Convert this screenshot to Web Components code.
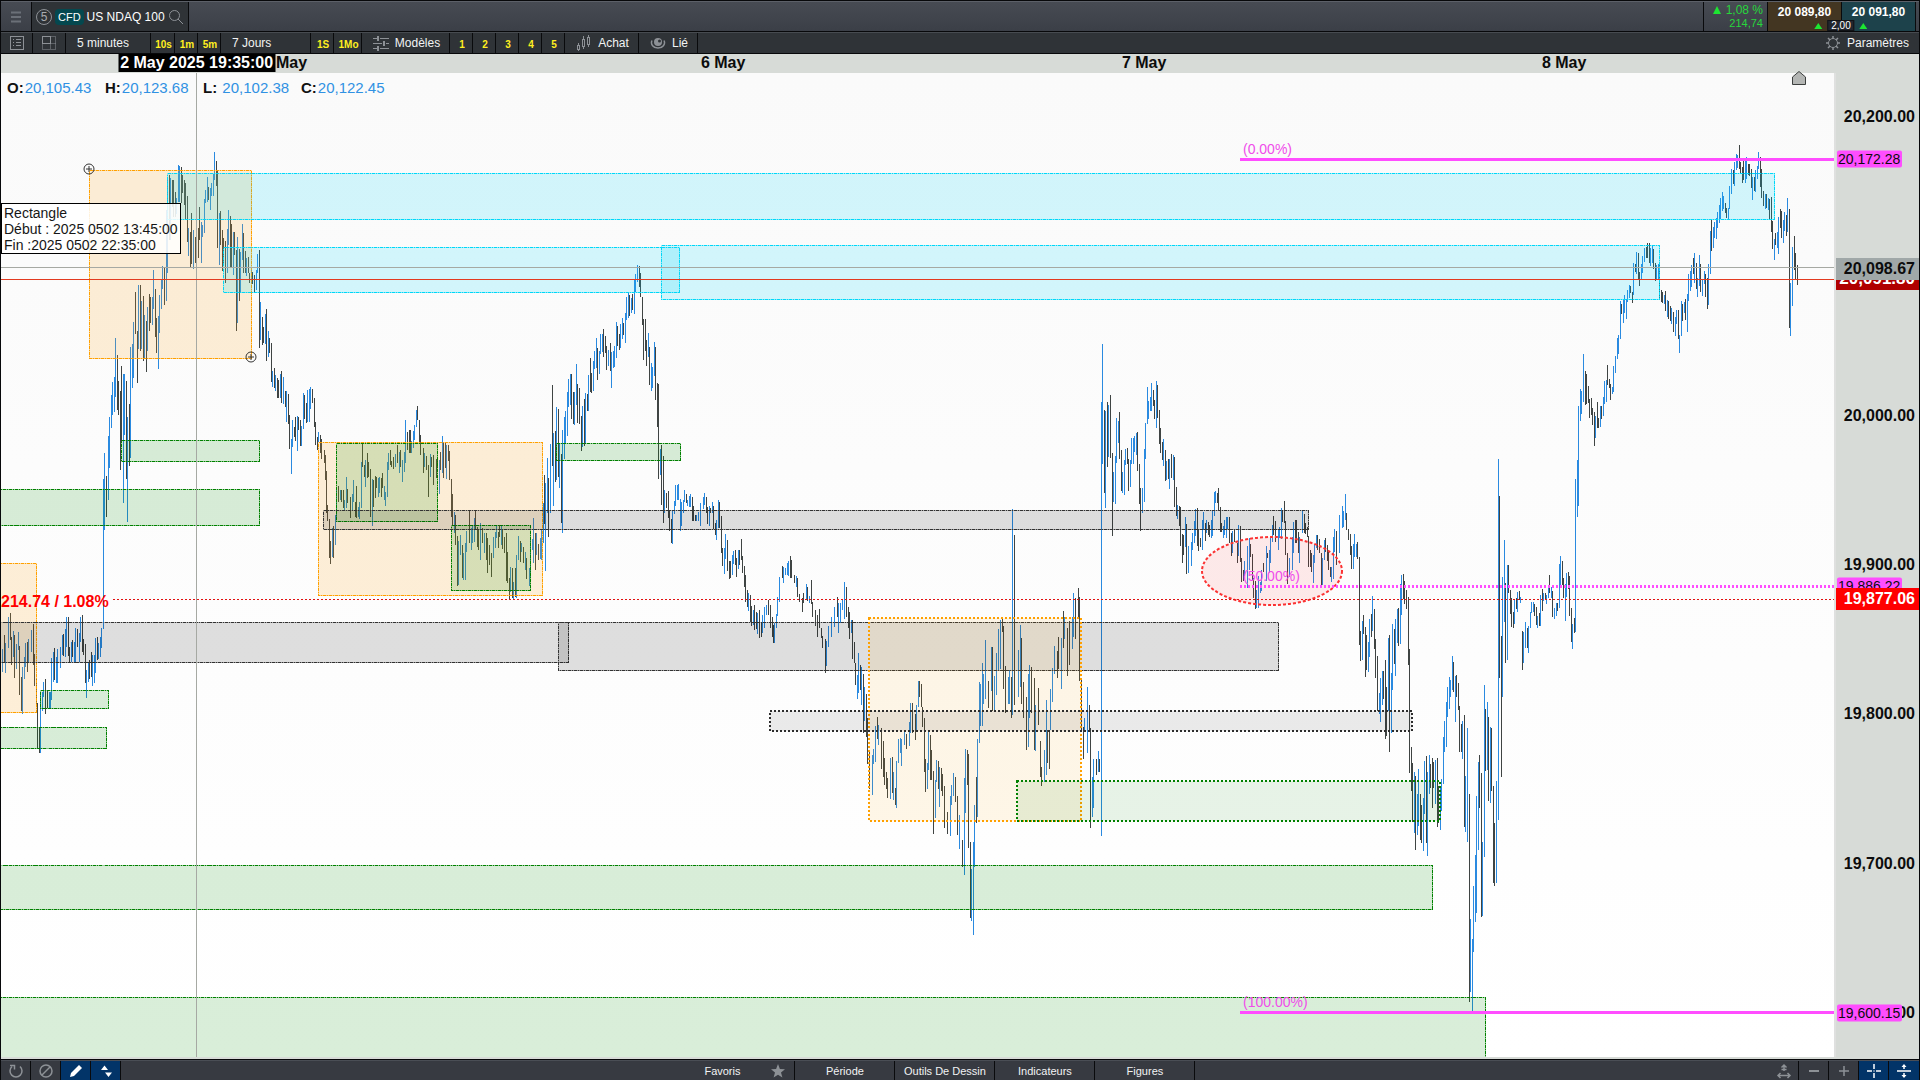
<!DOCTYPE html>
<html lang="fr">
<head>
<meta charset="utf-8">
<title>US NDAQ 100</title>
<style>
  html,body{ margin:0; height:100%; background:#0a0b0d; }
  body{ font-family:"Liberation Sans",Arial,sans-serif; }
</style>
</head>
<body>
<trading-app></trading-app>

<script>
/* 16x16 line icons, stroke = currentColor */
const ICONS={
  menu:'<path d="M3 3.500h10M3 8h10M3 12.500h10" stroke-width="2"/>',
  search:'<circle cx="6.500" cy="6.500" r="5"/><path d="M10 10l5 5"/>',
  list:'<rect x="1.500" y="1.500" width="13" height="13"/><path d="M4 4.500h1M4 7.500h1M4 10.500h1M7 4.500h5M7 7.500h5M7 10.500h5"/>',
  grid:'<rect x="1.500" y="1.500" width="8" height="7"/><path d="M9.500 1.500h5v13h-13v-6M9.500 8.500v6M9.500 8.500h5" stroke-dasharray="1 1"/>',
  sliders:'<path d="M0 3.500h4M7 3.500h9M0 8.500h9M13 8.500h3M0 13.500h4M7 13.500h9" /><path d="M5 1v5M11 6v5M5 11v5" stroke-width="2"/>',
  candles:'<path d="M2.500 8v2M2.500 14v2M7.500 1v3M7.500 11v3M12.500 0v2M12.500 9v3"/><rect x="1.500" y="10.500" width="2" height="4"/><rect x="6.500" y="4.500" width="2" height="7"/><rect x="11.500" y="2.500" width="2" height="7"/>',
  eye:'<path d="M2 5.500a6.500 5.500 0 1 0 12 0" stroke-width="1.500"/><circle cx="8" cy="7" r="4" fill="currentColor" stroke="none"/><circle cx="9.500" cy="6" r="1.500" fill="#2f3337" stroke="none"/>',
  gear:'<circle cx="8" cy="8" r="4.500"/><path d="M8 1v2.500M8 12.500v2.500M1 8h2.500M12.500 8h2.500M3 3l2 2M11 11l2 2M3 13l2-2M11 5l2-2" stroke-width="1.500"/>',
  undo:'<path d="M4 3.500a6 6 0 1 0 8 0" stroke-width="1.500"/><path d="M2 2.500h4.500v4" stroke-width="1.500"/>',
  forbid:'<circle cx="8" cy="8" r="6" stroke-width="1.500"/><path d="M4 12l8-8" stroke-width="1.500"/>',
  pencil:'<path d="M2 14l1-4 8-8 3 3-8 8z" fill="currentColor" stroke="none"/>',
  updown:'<path d="M3 7l3.500-4.500L10 7zM7 9.500h7L10.500 14z" fill="currentColor" stroke="none"/>',
  star:'<path d="M8 1l1.900 4.900 5.100.3-4 3.300 1.400 5L8 11.700l-4.400 2.800 1.400-5-4-3.300 5.100-.3z" fill="currentColor" stroke="none"/>',
  fit:'<path d="M8 2v6M5.500 4.500L8 2l2.500 2.500M5.500 6.500h5M2 12.500h12M4.500 10L2 12.500 4.500 15M11.500 10l2.500 2.500-2.500 2.500" stroke-width="1.500"/>',
  minus:'<path d="M3 8h10" stroke-width="2"/>',
  plus:'<path d="M3 8h10M8 3v10" stroke-width="1.500"/>',
  cross:'<path d="M8 1v5M8 10v5M1 8h5M10 8h5M7.500 8h1" stroke-width="1.500"/>',
  split:'<path d="M1 8h14M8 6V2M8 10v4" stroke-width="1.500"/><path d="M5.500 4L8 1l2.500 3zM5.500 12L8 15l2.500-3z" fill="currentColor" stroke="none"/>'
};

function define(name,html,setup){
  customElements.define(name,class extends HTMLElement{
    constructor(){
      super();
      const tpl=document.createElement('template');
      tpl.innerHTML=html;
      this.attachShadow({mode:'open'}).appendChild(tpl.content.cloneNode(true));
    }
    connectedCallback(){ if(setup) setup(this,this.shadowRoot); }
  });
}

define('ui-icon',`
  <style>
    :host{ display:block; width:16px; height:16px; flex:none; color:#8d9196; }
    svg{ display:block; width:100%; height:100%; fill:none; stroke:currentColor; stroke-width:1; }
  </style>
  <svg viewBox="0 0 16 16" aria-hidden="true"></svg>
`,(el,root)=>{ root.querySelector('svg').innerHTML=ICONS[el.getAttribute('name')]||''; });

/* one cell of a bar: optional icon + slotted text */
define('bar-button',`
  <style>
    :host{ display:block; flex:none; box-sizing:border-box; border-right:1px solid #090a0c; }
    button{ all:unset; box-sizing:border-box; width:100%; height:100%; display:flex; align-items:center; justify-content:center; gap:6px; padding-left:2px; white-space:nowrap; color:#f2f3f4; font-size:12px; cursor:pointer; }
    button.bare{ gap:0; padding-left:0; }
    ui-icon[hidden]{ display:none; }
    :host([left]) button{ justify-content:flex-start; padding-left:11px; }
    :host([fav]) button{ color:#ffef1f; font-size:10px; font-weight:bold; padding-top:3px; }
    :host([small]) button{ font-size:11px; padding-left:0; }
    :host([on]){ background:#023468; }
    :host([on]) ui-icon{ color:#fff; }
    :host([last]){ border-right:0; }
  </style>
  <button type="button"><ui-icon hidden></ui-icon><slot></slot></button>
`,(el,root)=>{
  const icon=el.getAttribute('icon'), button=root.querySelector('button');
  if(icon){
    const node=document.createElement('ui-icon');
    node.setAttribute('name',icon);
    root.querySelector('ui-icon').replaceWith(node);
  }
  if(el.hasAttribute('label')){
    button.setAttribute('aria-label',el.getAttribute('label'));
    button.className='bare';
  }
  if(el.hasAttribute('w')) el.style.width=el.getAttribute('w')+'px';
});

define('instrument-bar',`
  <style>
    :host{ display:flex; height:29px; border-top:1px solid #5c6068; background:linear-gradient(#474b53,#3b3f47); color:#fff; font-size:12px; }
    .name{ display:flex; align-items:center; gap:3px; padding:0 4px 0 4px; background:#2f3337; border-right:1px solid #090a0c; }
    .num{ width:14px; height:14px; border:1px solid #8d9196; border-radius:50%; display:grid; place-items:center; font-size:12px; color:#a8abaf; }
    .cfd{ background:#04484f; border-radius:4px; padding:0 3px; line-height:16px; font-size:11px; }
    .search{ all:unset; display:block; cursor:pointer; }
    .fill{ flex:1; }
    .change{ box-sizing:border-box; width:64px; padding:2px 4px 0 0; border-left:1px solid #090a0c; text-align:right; line-height:13px; color:#27d63c; }
    .change small{ display:block; font-size:11px; }
    .quotes{ position:relative; display:flex; }
    .side{ all:unset; box-sizing:border-box; width:74px; padding-bottom:9px; text-align:center; font-weight:bold; line-height:20px; border-left:1px solid #090a0c; cursor:pointer; }
    .bid{ background:#433622; }
    .ask{ background:#1d424b; }
    .spread{ position:absolute; left:50%; bottom:0; transform:translateX(-50%); display:flex; align-items:center; gap:5px; font-size:10px; color:#27e63c; }
    .spread b{ font-weight:normal; color:#fff; background:#22262e; border:1px solid #111317; padding:0 3px; line-height:9px; }
    .up{ width:0; height:0; border:4px solid transparent; border-top:0; border-bottom:6px solid #1de532; }
    .change .up{ display:inline-block; border-bottom-width:8px; margin-right:1px; }
    .end{ width:3px; border-left:1px solid #090a0c; }
  </style>
  <bar-button icon="menu" label="Menu" w="31"></bar-button>
  <div class="name">
    <span class="num">5</span><span class="cfd">CFD</span><span>US NDAQ 100</span>
    <button class="search" aria-label="Rechercher"><ui-icon name="search"></ui-icon></button>
  </div>
  <div class="fill"></div>
  <div class="change"><i class="up"></i> 1,08 %<small>214,74</small></div>
  <div class="quotes">
    <button class="side bid">20 089,80</button><button class="side ask">20 091,80</button>
    <div class="spread"><i class="up"></i><b>2,00</b><i class="up"></i></div>
  </div>
  <div class="end"></div>
`,(el,root)=>{ root.querySelector('bar-button').shadowRoot.querySelector('ui-icon').style.color='#6b7078'; });

define('chart-toolbar',`
  <style>
    :host{ display:flex; height:20px; border-top:1px solid #474b50; background:#2f3337; }
    .fill{ flex:1; }
  </style>
  <bar-button icon="list" label="Liste" w="32"></bar-button>
  <bar-button icon="grid" label="Grille" w="33"></bar-button>
  <bar-button left w="85">5 minutes</bar-button>
  <bar-button fav w="24">10s</bar-button>
  <bar-button fav w="23">1m</bar-button>
  <bar-button fav w="23">5m</bar-button>
  <bar-button left w="90">7 Jours</bar-button>
  <bar-button fav w="23">1S</bar-button>
  <bar-button fav w="28">1Mo</bar-button>
  <bar-button icon="sliders" w="88">Modèles</bar-button>
  <bar-button fav w="23">1</bar-button>
  <bar-button fav w="23">2</bar-button>
  <bar-button fav w="23">3</bar-button>
  <bar-button fav w="23">4</bar-button>
  <bar-button fav w="23">5</bar-button>
  <bar-button icon="candles" w="74">Achat</bar-button>
  <bar-button icon="eye" w="59">Lié</bar-button>
  <div class="fill"></div>
  <bar-button icon="gear" last w="106">Paramètres</bar-button>
`);

define('time-axis',`
  <style>
    :host{ display:block; position:relative; height:19px; overflow:hidden; background:#d7dbd7; font-size:16px; font-weight:bold; line-height:18px; color:#0c0c0c; }
    span{ position:absolute; top:0; transform:translateX(-50%); white-space:nowrap; }
    .cursor{ background:#000; color:#fff; padding:0 2px; }
  </style>
`,(el,root)=>{
  /* the cursor label hides the day number of the first mark */
  const days=[['May',15.15],['6 May',37.65],['7 May',59.6],['8 May',81.5]];
  for(const [text,left] of days) root.innerHTML+=`<span style="left:${left}%">${text}</span>`;
  root.innerHTML+='<span class="cursor" style="left:10.2%">2 May 2025 19:35:00</span>';
});

define('price-axis',`
  <style>
    :host{ display:block; position:relative; box-sizing:border-box; width:85px; border-left:2px solid #dfe0df; background:#d7dbd7; font-size:16px; font-weight:bold; color:#0c0c0c; overflow:hidden; }
    span{ position:absolute; right:0; box-sizing:border-box; padding-right:4px; line-height:22px; transform:translateY(-50%); text-align:right; }
    .fib{ left:1px; right:17px; padding:0 0 0 1px; background:#ff4dff; border-radius:2px; font-size:14px; font-weight:normal; line-height:17px; text-align:left; }
    .last{ left:-1px; background:#b00000; color:#fff; font-size:17px; border-radius:2px 0 0 2px; }
    .cursor{ left:-1px; background:#a0a8a8; }
    .close{ left:-1px; background:#f00; color:#fff; }
  </style>
`,(el,root)=>{
  const top=20229.8, range=659.3;
  const marks=[
    [20200,''],[20000,''],[19900,''],[19800,''],[19700,''],[19600,''],
    [20172.28,'fib'],[19886.22,'fib'],[19600.15,'fib'],
    [20091.80,'last'],[20098.67,'cursor'],[19877.06,'close']
  ];
  for(const [price,kind] of marks){
    const text=price.toLocaleString('en-US',{minimumFractionDigits:2});
    root.innerHTML+=`<span class="${kind}" style="top:${(top-price)/range*100}%">${text}</span>`;
  }
});

/* bars: colour (b up / k down) x high low, in plot units */
const BARS=`
b2 649 672,k4 635 663,b5 643 673,b8 617 648,k10 613 640,k11 637 665,b13 631 657,k14 635 678,b16 644 669,b18 632 650,k19 646 695,k21 677 711,b22 667 714,b24 657 679,b25 643 667,k27 642 672,b28 639 662,b31 630 652,k33 624 665,k34 654 686,k36 679 705,k37 703 748,k39 727 753,b40 693 753,b42 692 711,b43 682 697,k45 679 714,k47 690 708,b49 692 708,b50 692 708,b51 658 700,b53 652 682,k54 648 680,b56 657 683,b57 649 683,b60 647 668,b62 635 655,k63 634 656,b65 629 657,b66 617 647,k68 617 656,k69 647 662,b71 642 662,k72 640 657,b74 642 662,b75 628 662,k77 629 647,b79 633 662,b80 617 642,k82 615 652,k83 639 655,k85 644 683,b86 670 698,b88 662 682,k89 660 679,k91 652 677,b92 655 686,b94 655 683,b95 638 673,k97 637 660,b98 643 659,b100 637 657,b101 628 648,b103 479 629,b104 453 530,k106 476 517,b108 436 500,b109 417 468,b111 395 428,b112 382 415,b114 377 412,b115 338 397,k117 355 410,k118 381 415,k120 391 470,k121 366 442,b123 374 503,b124 374 435,k126 381 479,b127 417 522,k129 404 466,b130 347 458,b132 344 388,b133 322 378,k135 292 334,k137 331 383,b138 285 349,k140 285 351,b141 301 349,k143 296 361,b144 315 358,k146 321 372,b147 307 351,k149 294 331,k150 297 323,b152 297 325,b153 270 309,k155 289 337,k156 318 353,b158 316 369,b159 295 333,b161 280 309,b162 266 289,k164 268 305,b166 210 301,b167 180 273,k169 175 240,b170 178 240,k172 180 207,k173 180 217,k175 192 217,b176 198 214,b178 165 202,b179 166 202,k181 167 203,k182 175 193,k184 180 205,k185 183 220,k187 196 242,b188 228 256,k190 232 267,k191 213 264,b193 230 269,k195 237 263,b196 242 261,k198 228 258,k199 207 240,b201 222 263,b202 225 237,b204 199 233,b205 190 203,b207 177 202,k208 187 200,b210 188 210,b211 183 196,b213 174 196,b214 152 180,k216 161 186,k217 170 248,b219 213 265,k220 211 245,k222 230 271,k223 238 266,k225 241 283,b227 229 273,b228 210 245,k230 216 267,k231 224 267,b233 232 275,k234 232 255,k236 250 331,b237 237 323,k239 249 301,b240 252 293,b242 224 260,k243 233 273,k245 251 273,b246 258 276,k248 257 273,k249 273 283,b251 268 283,k252 272 284,k254 275 292,b256 270 290,b257 254 273,k259 250 348,b260 302 340,k262 317 345,k263 327 343,b265 314 344,k266 309 361,b268 331 357,k269 338 353,k271 343 382,b272 371 387,k274 368 388,b275 375 391,k277 378 398,k278 380 398,b280 374 398,k281 371 403,b283 377 404,k285 391 407,b286 391 422,k288 394 424,k289 415 449,b291 439 474,b292 420 447,k294 427 437,k295 417 441,b297 416 451,k298 417 430,k300 420 446,b301 426 446,b303 393 429,k304 395 419,k306 403 423,b307 390 422,b309 389 422,b310 387 409,k312 389 403,k314 398 427,k315 422 445,k317 437 450,b318 432 442,k320 435 453,k321 439 459,k324 450 463,k325 455 480,k326 471 513,k327 505 521,k329 519 558,k330 541 564,b332 528 557,k333 526 558,b335 515 545,b336 487 517,k338 486 502,b340 490 500,k341 490 502,k343 490 508,b344 500 511,b346 477 508,k347 489 503,k350 497 518,b352 494 510,b353 480 502,k355 502 517,k356 486 518,b358 507 517,b359 502 519,b361 462 508,k362 443 467,k364 465 477,b365 460 487,k367 453 478,k368 462 477,k370 469 517,b372 479 526,k373 480 507,k375 476 498,k376 477 488,b378 478 497,b379 477 493,k381 478 497,k382 473 488,b384 486 500,b385 492 506,b387 462 497,b388 453 470,k390 450 465,k391 461 467,k393 457 469,b395 454 467,k397 445 463,b399 452 473,k400 450 467,b402 460 482,b404 452 472,b405 420 463,k407 432 450,k409 430 453,k410 430 453,b411 441 453,b413 431 448,b414 425 440,b416 410 427,k417 406 420,k419 420 443,k420 435 455,k423 448 473,b424 453 467,k426 456 470,k428 465 497,b430 454 477,k431 457 467,k433 455 485,k436 459 478,k437 458 467,b439 460 494,k440 452 470,b442 436 473,k443 442 478,k445 443 468,b446 445 479,k448 445 461,k449 451 480,k451 479 517,k452 494 525,b454 512 533,k455 515 545,k457 536 586,b458 541 585,b460 535 555,k462 545 578,b463 553 580,b465 543 580,b466 531 552,k469 511 543,b471 528 550,b472 526 543,b474 518 542,k475 511 530,k477 527 547,k478 530 550,b480 523 560,k482 528 543,b484 533 553,k486 533 560,k487 538 573,k489 545 565,k491 553 577,b493 537 558,b495 532 548,b496 526 538,k498 532 548,k499 525 537,b501 526 545,k502 529 549,k504 537 553,k506 533 581,k507 552 583,k509 578 599,b510 567 592,k512 568 598,b513 582 599,k515 568 597,b516 555 598,b518 536 560,k520 541 562,b521 543 552,k523 547 563,b525 552 570,k526 558 579,b529 568 586,b530 538 577,b532 539 550,b533 518 563,k535 533 570,b536 533 555,k538 544 560,b540 538 559,b541 529 560,b543 503 543,
k544 475 524,b545 483 571,b547 458 513,k548 478 537,b550 444 513,k552 385 466,b553 433 506,k555 431 482,b556 407 480,k558 409 477,b559 444 488,k561 454 523,b562 430 533,b564 417 459,b565 411 443,b567 392 436,b568 379 407,b570 374 405,k571 374 419,k573 392 424,b574 392 425,b576 364 405,k577 384 423,k579 388 424,k581 416 451,b582 406 447,k584 399 446,b585 393 444,k587 394 411,b588 375 411,k590 358 392,k591 373 393,b593 361 391,b594 351 369,b596 338 368,k597 348 380,b599 351 374,b600 334 354,b602 334 352,k603 329 357,k605 336 353,k606 346 370,b608 350 366,k610 343 371,b611 352 388,b613 351 368,b614 346 367,b616 322 358,k617 326 346,k619 334 350,b620 324 348,b622 318 339,k623 323 335,b625 313 343,b626 297 320,b628 293 318,k629 295 316,b631 298 313,k632 294 310,b634 280 314,b635 274 292,b637 265 282,k639 266 287,k640 273 297,k642 297 325,k643 319 360,k645 319 351,k646 340 366,b648 333 357,k649 347 385,b651 363 391,b652 367 388,b654 342 376,k655 347 400,k657 383 427,k658 384 479,b660 449 475,k661 445 505,k663 456 523,b664 490 513,k666 493 508,k668 491 518,k669 510 531,k671 519 543,b672 510 544,b674 501 514,b675 485 506,b677 485 500,b678 484 500,b680 499 531,b681 502 526,b683 500 513,b684 490 502,k686 494 503,b687 500 506,b689 496 507,b690 494 507,k692 497 521,k693 506 521,k695 515 521,b696 515 521,b698 512 521,b700 503 526,b703 497 509,b704 493 505,k706 497 513,k707 507 524,b709 506 526,k710 508 513,b712 502 513,k713 506 529,k715 523 535,b716 520 540,b718 500 528,k719 502 528,k721 516 553,k722 548 566,b724 548 574,b725 534 559,k727 540 571,k729 561 579,k730 561 578,b732 555 575,b733 551 564,k735 550 565,k736 558 577,b738 550 569,k739 550 565,k741 539 560,k742 556 573,k744 566 587,k745 575 602,k747 590 607,b748 593 611,k750 595 622,k751 606 626,b753 610 625,k754 605 630,k756 612 629,b757 613 634,k759 610 638,
k761 622 637,b762 615 633,b764 607 628,b766 605 615,k768 600 615,k770 605 628,k772 617 637,k773 625 643,b774 623 643,b776 614 628,b777 597 616,b779 577 602,k782 566 578,b783 567 583,b785 568 575,b787 563 575,b788 561 576,k790 556 578,k791 560 578,k794 575 583,b796 576 587,k797 578 597,k799 594 602,k802 598 612,k803 593 603,b806 584 600,k807 587 601,b809 596 603,k811 580 604,k812 602 617,k815 610 626,k817 615 637,k819 609 628,k821 628 638,k822 636 648,k825 639 673,b826 641 666,b828 626 647,b831 617 637,b834 607 627,k837 597 617,b838 603 633,b840 603 623,b842 599 610,b844 582 619,k846 587 617,k848 607 628,k849 612 639,b851 620 633,k852 620 659,k854 642 663,k855 663 685,b857 675 699,b858 653 693,k860 665 690,b861 667 705,k863 674 733,b864 687 721,k866 694 737,k867 718 764,k869 752 789,b872 755 795,b873 749 764,b875 726 762,k877 717 739,b878 725 745,k881 728 769,k883 741 777,k884 758 785,k886 772 789,k887 778 798,b890 758 799,k892 757 793,b893 772 800,k895 788 805,b896 761 808,b898 739 763,b900 738 753,b901 739 766,b904 731 745,k906 734 749,b909 722 746,b910 703 733,k912 703 733,k915 714 740,b916 705 731,b918 681 707,k919 681 697,k921 684 707,k922 707 727,k924 718 772,k925 759 792,b927 763 789,b928 731 770,k930 735 780,k931 750 780,k933 771 834,b935 780 818,b936 760 782,k938 761 789,b939 767 807,k941 768 791,k942 774 796,k944 786 828,k947 812 834,b950 796 836,b951 785 805,b953 773 796,k955 777 802,k957 796 835,b959 815 849,k962 840 867,b964 778 875,b965 749 813,k967 750 785,k968 754 848,k970 842 918,b971 869 921,b973 842 935,b974 805 867,k976 777 823,b977 739 817,b979 682 743,b980 684 726,b982 663 726,b983 674 704,b985 640 699,k988 681 708,b991 647 691,k992 647 711,b994 676 711,b996 653 695,b998 629 670,b1000 620 669,k1002 619 632,k1003 626 689,k1005 666 713,b1008 677 704,b1009 670 704,k1011 677 718,b1012 509 715,k1014 535 705,b1018 650 697,b1020 625 687,k1021 638 704,k1023 682 718,k1026 697 750,b1028 674 747,b1029 665 718,k1031 667 713,k1034 678 750,b1035 705 751,k1038 688 725,k1040 741 777,k1041 767 786,b1044 750 782,b1046 700 775,k1047 730 763,k1049 730 769,b1050 689 730,b1052 668 702,b1054 646 674,k1057 651 678,k1058 637 669,b1061 638 689,k1063 611 648,b1064 617 639,k1067 628 676,k1069 621 665,b1072 617 649,b1073 593 637,k1075 598 639,k1078 588 618,k1079 597 681,k1081 680 730,k1083 727 759,b1084 718 732,b1087 687 753,k1089 705 732,k1090 728 828,b1092 777 817,b1093 759 808,k1096 759 775,b1098 751 772,k1099 759 772,
b1101 402 836,b1102 344 464,k1104 410 493,b1105 411 508,k1107 402 467,b1108 405 457,k1110 395 458,k1112 453 536,b1113 472 502,b1115 456 504,b1116 418 463,b1118 421 443,k1119 412 459,k1121 450 491,b1122 472 493,b1124 460 495,b1125 449 465,k1127 448 464,k1128 459 491,b1130 460 487,b1131 438 464,b1133 438 464,b1134 436 452,b1136 433 455,k1137 432 471,k1139 464 504,k1140 488 531,b1142 488 513,b1144 449 502,b1145 423 459,b1147 387 424,b1148 401 419,b1150 397 411,b1151 383 411,k1153 390 406,k1154 400 419,b1156 381 428,k1157 385 418,k1159 410 444,k1160 428 453,k1162 442 460,b1163 439 466,k1165 450 481,b1166 461 480,k1168 459 479,b1169 459 489,k1171 454 478,b1173 455 480,k1174 457 507,k1176 487 516,b1177 505 519,k1179 506 526,k1180 507 546,k1182 534 563,k1183 535 555,b1185 517 547,k1186 524 574,b1188 546 573,b1191 542 566,b1192 533 550,b1194 521 543,b1195 509 536,k1197 508 546,k1198 530 551,k1200 538 547,b1202 520 550,b1203 512 530,k1205 523 541,b1206 520 533,k1208 522 535,k1209 525 537,b1211 520 538,b1212 511 536,b1214 492 516,b1215 491 503,k1217 493 503,k1218 488 510,k1220 507 532,k1221 523 532,b1223 526 538,b1224 520 535,b1226 517 538,b1227 517 529,k1229 517 543,k1231 533 556,b1232 531 553,k1234 530 542,k1237 543 563,b1238 525 556,k1240 526 562,k1241 558 582,k1243 570 581,b1244 561 576,b1247 546 588,b1249 538 570,k1250 544 557,k1252 554 580,k1253 578 598,k1255 581 609,b1256 590 608,b1258 576 608,b1260 582 593,b1261 570 591,k1263 563 572,b1266 546 581,k1267 553 558,b1269 550 573,b1270 538 563,b1272 525 542,k1273 516 535,k1275 521 542,b1278 530 550,b1279 527 538,b1281 508 539,k1282 511 522,k1284 501 523,k1285 521 555,k1287 553 584,b1289 558 577,b1292 537 570,b1293 522 553,k1295 520 543,k1296 520 543,k1298 532 553,b1299 537 563,b1302 511 533,k1304 514 533,k1305 523 534,k1307 527 537,k1308 536 567,k1310 550 567,k1311 553 572,b1313 555 583,b1314 544 563,b1316 535 548,k1317 535 550,k1319 539 553,k1321 553 586,b1322 558 585,b1324 540 560,k1325 538 552,k1327 545 561,k1328 552 570,k1330 567 577,b1331 567 582,b1333 537 579,b1334 529 552,k1336 531 565,b1339 515 553,b1342 506 528,b1343 511 527,b1345 494 520,k1346 513 530,k1348 529 540,k1350 534 555,k1351 546 569,b1353 544 569,b1354 534 557,b1356 544 557,k1357 542 559,k1359 557 645,k1360 631 661,b1362 621 660,k1363 615 634,k1365 627 677,k1366 635 670,b1368 642 672,b1369 619 657,k1371 614 637,b1372 596 631,k1374 609 649,k1375 639 678,k1377 656 711,b1379 693 714,b1380 678 722,b1382 671 705,k1383 671 699,k1385 660 739,k1386 687 736,b1388 638 711,k1389 635 752,b1391 673 733,b1392 624 690,k1394 629 664,b1395 619 676,b1397 609 643,k1398 608 646,b1400 584 644,b1401 575 615,k1403 574 599,k1404 581 604,k1406 590 609,k1408 597 665,
k1409 649 773,k1411 747 791,k1412 763 822,b1414 772 833,k1415 776 850,b1417 794 835,b1418 769 826,k1420 794 840,k1421 805 843,b1423 798 851,b1424 761 814,k1426 756 843,b1427 772 856,b1429 755 794,k1430 764 788,k1432 758 808,k1433 762 788,b1435 760 804,k1437 758 827,k1438 786 823,b1440 787 830,b1441 779 811,b1443 737 784,b1444 721 752,b1446 702 747,b1447 687 717,b1449 677 709,b1450 680 697,b1452 656 690,k1453 662 692,b1455 676 722,k1456 675 697,k1458 683 710,k1459 706 752,k1461 724 752,b1462 721 759,k1464 715 827,b1465 776 832,b1467 728 842,k1469 794 1002,b1470 919 992,b1472 939 1011,b1473 886 952,b1475 855 922,b1476 796 913,b1478 762 850,k1479 755 808,k1481 773 917,b1482 842 916,b1484 685 857,k1485 709 771,b1487 702 770,k1488 717 801,b1490 727 803,k1491 728 791,k1493 786 883,k1494 823 886,b1496 781 883,b1498 459 820,k1499 496 678,k1501 636 777,b1502 577 697,b1504 540 622,k1505 583 663,b1507 565 660,k1508 565 593,k1510 590 614,k1511 598 627,k1513 612 628,b1514 600 624,k1516 598 609,b1517 592 612,k1519 591 600,b1520 597 603,k1522 631 670,b1523 632 663,b1525 622 648,k1527 628 648,b1528 626 653,b1530 612 628,b1531 602 613,b1533 602 612,k1534 604 616,k1536 607 625,b1537 616 628,k1539 613 626,b1540 595 626,k1542 589 611,b1543 593 601,k1545 593 600,b1546 595 604,b1548 588 598,k1549 575 593,b1551 587 598,k1552 591 617,b1554 608 619,b1556 603 616,k1557 603 611,b1559 564 608,b1560 556 585,k1562 561 585,k1563 578 598,b1565 584 621,b1566 573 597,k1568 572 589,k1569 576 616,k1571 608 642,b1572 624 649,k1574 618 633,b1575 479 632,
b1577 460 517,b1578 406 506,b1580 389 421,b1581 391 414,b1583 354 402,k1585 371 405,k1586 374 404,k1588 386 403,k1589 399 418,k1591 398 415,k1592 408 425,k1594 412 446,b1595 416 438,k1597 402 428,k1598 418 428,b1600 406 427,k1601 406 419,b1603 397 416,b1604 381 404,b1606 380 402,k1607 365 385,k1609 379 388,k1610 384 400,b1612 387 394,b1613 366 392,b1615 356 373,b1617 338 359,b1618 335 354,b1620 301 339,k1621 304 314,b1623 299 323,b1624 295 313,b1626 299 319,b1627 290 302,b1629 285 298,k1630 286 293,k1632 292 303,b1633 263 295,k1635 264 272,b1636 252 274,k1638 253 279,k1639 272 286,b1641 264 279,b1642 256 273,b1644 248 262,k1646 247 258,k1647 243 258,k1649 243 263,b1650 248 266,b1652 246 263,k1653 249 269,k1655 263 281,b1656 265 280,b1658 264 279,k1659 262 299,k1661 290 302,k1662 292 303,b1664 295 304,k1665 291 311,b1667 300 317,k1668 301 319,k1670 306 321,b1671 308 324,k1673 312 332,b1675 317 336,b1676 310 324,k1678 310 339,b1679 335 353,b1681 301 336,k1682 304 321,b1684 302 313,k1685 299 320,b1687 294 332,b1688 274 301,b1690 271 291,b1691 265 287,k1693 258 274,b1694 253 283,k1696 263 289,b1697 278 297,b1699 255 286,k1700 264 292,b1702 279 296,b1704 271 284,k1705 274 297,k1707 278 309,b1708 264 305,b1710 231 274,k1711 219 251,b1713 227 248,b1714 222 238,b1716 218 239,b1717 212 228,b1719 205 223,b1720 198 219,b1722 192 211,b1723 196 209,k1725 203 213,k1726 208 218,b1728 208 219,b1729 186 209,b1731 169 194,k1733 170 184,b1734 162 186,b1736 154 170,b1737 155 168,k1739 145 169,k1740 162 173,k1742 167 183,k1743 161 180,b1745 161 183,b1746 157 179,k1748 164 175,k1749 164 176,k1751 169 188,b1752 177 200,k1754 177 191,b1755 170 192,b1757 166 179,b1758 152 169,k1760 157 187,k1761 169 198,k1763 191 206,b1765 194 209,k1766 194 208,b1768 198 210,k1769 199 219,k1771 197 232,k1772 221 249,b1774 239 260,k1775 233 245,b1777 232 248,b1778 217 254,k1780 209 228,k1781 211 238,b1783 220 243,b1784 212 231,k1786 215 236,b1787 198 232,k1789 209 328,b1790 283 336,b1792 247 306,k1794 236 270,k1795 253 279,k1797 265 285`;

/* zones: kind, left, top, right, bottom */
const ZONES=[
  ['orange',89,170,251,358],['cyan',167,173,1774,219],['cyan',223,247,679,292],['cyan',661,245,1659,299],
  ['green',121,440,259,461],['green',-4,489,259,525],['orange',-4,563,36,712],
  ['gray',-4,622,568,662],['gray',558,622,1278,670],['green',40,690,108,708],['green',-4,727,106,748],
  ['orange',318,442,542,595],['green',336,443,437,521],['green',451,525,530,590],
  ['gray',323,510,1308,529],['green',556,443,680,460],
  ['orange dots',869,618,1081,821],['black dots',770,711,1412,731],['green dots',1017,781,1440,821],
  ['green',-4,865,1432,909],['green',-4,997,1485,1070]
];

define('price-plot',`
  <style>
    :host{ display:block; position:relative; overflow:hidden; background:linear-gradient(#fafafa,#fff); }
    svg{ position:absolute; inset:0; width:100%; height:100%; fill:none; }
    .b{ stroke:#2a8ae0; }
    .k{ stroke:#3f4443; }
    .zone{ stroke-dasharray:3 1 1 1; }
    .dots{ stroke-width:2; stroke-dasharray:2 2; }
    .orange{ stroke:#ffa000; fill:rgba(255,165,30,.17); }
    .cyan{ stroke:#00d8f8; fill:rgba(0,220,255,.16); }
    .green{ stroke:#008000; fill:rgba(0,140,0,.15); }
    .gray{ stroke:#333; fill:rgba(0,0,0,.12); }
    .black{ stroke:#2c2c2c; fill:rgba(0,0,0,.08); }
    .orange.dots{ fill:rgba(255,165,0,.09); }
    .green.dots{ fill:rgba(0,128,0,.09); }
    .under{ fill:none; stroke-dasharray:none; stroke-opacity:.4; }
    .ellipse{ stroke:#fb3232; stroke-width:2; stroke-dasharray:3 2; fill:rgba(255,0,0,.08); }
    .fib{ stroke:#ff4dff; stroke-width:3; }
    .cross{ stroke:#a6a9a3; }
    .handle{ stroke:#333; fill:none; }
    text{ font-size:14px; fill:#f04dea; }
    .pct{ font-size:16px; font-weight:bold; fill:#f00; }
    dl{ position:relative; margin:0; padding:6px 0 0 6px; display:grid; grid-template-columns:repeat(4,98px); font-size:15px; line-height:18px; }
    dl div{ display:flex; gap:1px; }
    dt{ font-weight:bold; color:#111; }
    dd{ margin:0; color:#3091e3; }
    .tip{ position:absolute; left:0; top:130px; border:1px solid #000; background:rgba(255,255,255,.86); padding:1px 2px 0; font-size:14px; line-height:16px; color:#161616; white-space:pre; }
  </style>
  <svg viewBox="1 73 1833 984" preserveAspectRatio="none">
    <g class="bars" shape-rendering="crispEdges"><path class="b"/><path class="k"/></g>
    <g class="zones" shape-rendering="crispEdges"></g>
    <ellipse class="ellipse" cx="1272" cy="571" rx="70" ry="34"/>
    <g shape-rendering="crispEdges">
      <path class="fib" d="M1240 159.500H1834M1240 1012.500H1834"/>
      <path class="fib" d="M1240 586.500H1834" stroke-dasharray="2 2"/>
      <path stroke="#e01010" d="M113 599.500H1834" stroke-dasharray="2 2"/>
      <path class="cross" d="M0 267.500H1834M196.500 73V1057"/>
      <path stroke="#e23a20" d="M0 279.500H1834"/>
    </g>
    <g class="handle"><circle cx="89" cy="169" r="5"/><path d="M86 169h6M89 166v6"/><circle cx="251" cy="357" r="5"/><path d="M248 357h6M251 354v6"/></g>
    <text x="1243" y="154">(0.00%)</text>
    <text x="1243" y="581">(50.00%)</text>
    <text x="1243" y="1007">(100.00%)</text>
    <text class="pct" x="1" y="607">214.74 / 1.08%</text>
  </svg>
  <dl>
    <div><dt>O:</dt><dd>20,105.43</dd></div>
    <div><dt>H:</dt><dd>20,123.68</dd></div>
    <div><dt>L:</dt><dd>&nbsp;20,102.38</dd></div>
    <div><dt>C:</dt><dd>20,122.45</dd></div>
  </dl>
  <div class="tip">Rectangle
Début : 2025 0502 13:45:00
Fin :2025 0502 22:35:00</div>
`,(el,root)=>{
  const d={b:'',k:''};
  for(const bar of BARS.trim().split(/,\s*/)){
    const [x,hi,lo]=bar.slice(1).split(' ');
    d[bar[0]]+=`M${x}.5 ${hi}V${lo}`;
  }
  root.querySelector('.b').setAttribute('d',d.b);
  root.querySelector('.k').setAttribute('d',d.k);
  root.querySelector('.zones').innerHTML=ZONES.map(([kind,x1,y1,x2,y2])=>{
    const thick=kind.includes('dots'), half=thick?0:.5;
    const box=`x="${x1+half}" y="${y1+half}" width="${x2-x1}" height="${y2-y1}"`;
    return `<rect class="zone ${kind}" ${box}/>`+(thick?'':`<rect class="${kind} under" ${box}/>`);
  }).join('');
});

define('chart-footer',`
  <style>
    :host{ display:flex; height:19px; border-top:1px solid #4a4e55; background:#373a41; }
    .a{ flex:12; }
    .z{ flex:13; }
    .fav{ box-sizing:border-box; width:145px; display:grid; grid-template-columns:1fr 32px; align-items:center; border-right:1px solid #090a0c; }
    .fav bar-button{ height:100%; padding-left:32px; }
    .fav ui-icon{ justify-self:center; }
  </style>
  <bar-button icon="undo" label="Annuler" w="30"></bar-button>
  <bar-button icon="forbid" label="Effacer" w="30"></bar-button>
  <bar-button icon="pencil" label="Dessiner" on w="30"></bar-button>
  <bar-button icon="updown" label="Ordres" on w="30"></bar-button>
  <div class="a"></div>
  <div class="fav"><bar-button small last>Favoris</bar-button><ui-icon name="star"></ui-icon></div>
  <bar-button small w="100">Période</bar-button>
  <bar-button small w="100">Outils De Dessin</bar-button>
  <bar-button small w="100">Indicateurs</bar-button>
  <bar-button small w="100">Figures</bar-button>
  <div class="z"></div>
  <bar-button icon="fit" label="Ajuster" w="30"></bar-button>
  <bar-button icon="minus" label="Réduire" w="30"></bar-button>
  <bar-button icon="plus" label="Agrandir" w="30"></bar-button>
  <bar-button icon="cross" label="Réticule" on w="30"></bar-button>
  <bar-button icon="split" label="Échelle" on last w="30"></bar-button>
`);

define('trading-app',`
  <style>
    :host{ box-sizing:border-box; height:100vh; min-height:480px; padding:1px 1px 0; display:grid; grid-template-rows:auto auto auto 1fr auto; background:#07080a; overflow:hidden; }
    chart-toolbar{ margin-top:1px; }
    time-axis{ margin-top:1px; }
    .chart{ position:relative; display:grid; grid-template-columns:1fr auto; min-height:0; border-bottom:2px solid #d7dbd7; }
    chart-footer{ margin-top:1px; }
    .home{ position:absolute; right:113px; top:-2px; width:14px; height:14px; fill:#b4b6b4; stroke:#3c3f3e; }
  </style>
  <instrument-bar></instrument-bar>
  <chart-toolbar></chart-toolbar>
  <time-axis></time-axis>
  <div class="chart">
    <price-plot></price-plot>
    <price-axis></price-axis>
    <svg class="home" viewBox="0 0 14 14"><path d="M.5 13.500V6L7 .5 13.500 6v7.500z"/></svg>
  </div>
  <chart-footer></chart-footer>
`);
</script>
</body>
</html>
